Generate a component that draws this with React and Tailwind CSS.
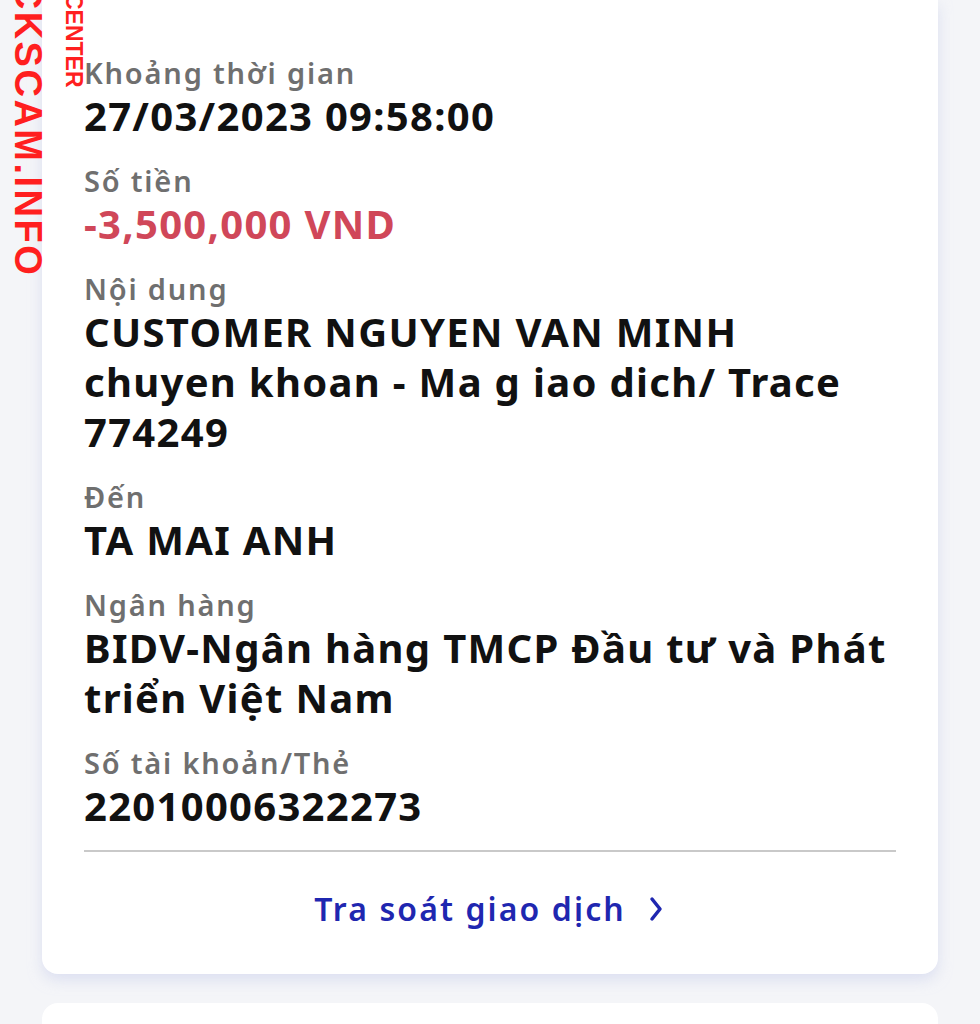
import React from "react";

function Field({ label, children, valueClass = "text-[#111111]" }) {
  return (
    <div className="flex flex-col">
      <div className="text-[29px] leading-[36px] font-semibold text-[#6f6f6f] tracking-[1.8px] whitespace-nowrap">{label}</div>
      <div className={`text-[40px] leading-[50px] font-bold tracking-[1.3px] whitespace-nowrap ${valueClass}`}>{children}</div>
    </div>
  );
}

export default function App() {
  return (
    <div className="relative w-[980px] h-[1024px] overflow-hidden bg-[#f4f5f8] font-['Noto_Sans','Lato',sans-serif]">
      <div className="px-[42px]">
        <div className="bg-white rounded-b-[16px] shadow-[0_6px_14px_rgba(200,205,235,0.55)] px-[42px] pt-[55px]">
          <div className="flex flex-col gap-[22px]">
            <Field label="Khoảng thời gian">27/03/2023 09:58:00</Field>
            <Field label="Số tiền" valueClass="text-[#d04759]">-3,500,000 VND</Field>
            <Field label="Nội dung">
              CUSTOMER NGUYEN VAN MINH
              <br />
              chuyen khoan - Ma g iao dich/ Trace
              <br />
              774249
            </Field>
            <Field label="Đến">TA MAI ANH</Field>
            <Field label="Ngân hàng">
              BIDV-Ngân hàng TMCP Đầu tư và Phát
              <br />
              triển Việt Nam
            </Field>
            <Field label="Số tài khoản/Thẻ">22010006322273</Field>
          </div>
          <div className="mt-[19px] h-[2px] bg-[#c9c9c9]" />
          <div className="flex items-center justify-center gap-[20px] h-[122px] pb-[8px] text-[#1f27b0]">
            <span className="text-[32px] font-semibold tracking-[2.1px]">Tra soát giao dịch</span>
            <svg width="20" height="30" viewBox="0 0 20 30" fill="none">
              <polyline points="6,5 14,15 6,25" stroke="#1f27b0" strokeWidth="3.5" strokeLinecap="round" strokeLinejoin="round" />
            </svg>
          </div>
        </div>
        <div className="mt-[29px] h-[60px] bg-white rounded-t-[16px]" />
      </div>

      <div className="absolute left-[9px] top-[-106px] [writing-mode:vertical-rl] text-[38px] leading-[38px] font-bold text-[#ff1f1f] tracking-[2.5px] font-['Liberation_Sans',sans-serif] whitespace-nowrap">
        CHECKSCAM.INFO
      </div>
      <div className="absolute left-[62px] top-[-7px] [writing-mode:vertical-rl] text-[23px] leading-[23px] font-bold text-[#ff1f1f] font-['Liberation_Sans',sans-serif] whitespace-nowrap">
        CENTER
      </div>
    </div>
  );
}
